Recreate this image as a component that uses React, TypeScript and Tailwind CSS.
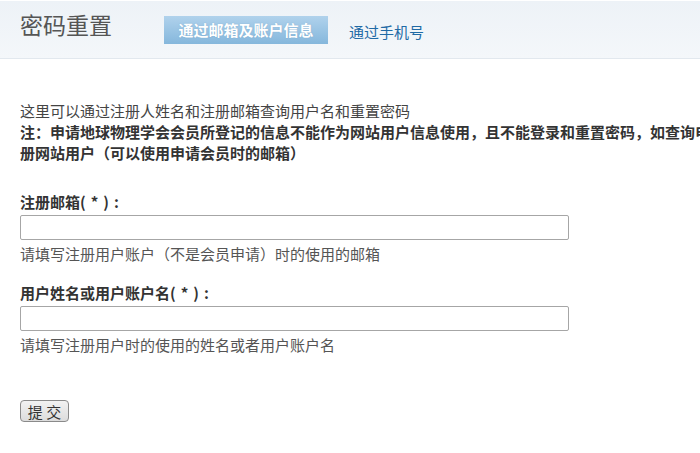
import { FC } from "react";

const font = { fontFamily: '"Noto Sans CJK SC", "Noto Sans", sans-serif' };

const Field: FC<{ label: string; hint: string; top: string }> = ({ label, hint, top }) => (
  <div className={top}>
    <p className="font-bold text-[15px] leading-[21px] text-[#333] whitespace-nowrap">
      {label}
      <span className="tracking-[5px]">(*):</span>
    </p>
    <input
      type="text"
      className="mt-[3px] block w-[549px] h-[25px] border border-[#a6a6a6] rounded-[2px] bg-white outline-none"
    />
    <p className="mt-[3px] text-[15px] leading-[21px] text-[#555]">{hint}</p>
  </div>
);

const App: FC = () => {
  return (
    <div className="w-[700px] h-[453px] overflow-hidden bg-white" style={font}>
      <div className="h-[59px] border-b border-[#e2e8ee] bg-gradient-to-b from-[#edf2f7] to-[#f4f7fa] border-t border-t-white flex items-start px-[20px]">
        <h1 className="mt-[8px] text-[23px] leading-[30px] text-[#555] font-normal whitespace-nowrap">
          密码重置
        </h1>
        <div className="ml-[52px] mt-[15px] w-[164px] h-[28px] flex items-center justify-center bg-gradient-to-b from-[#b0d2ec] to-[#85b7dc] text-white font-bold text-[15px] whitespace-nowrap [text-shadow:0_0_1px_rgba(80,130,170,0.5)]">
          通过邮箱及账户信息
        </div>
        <a className="ml-[21px] mt-[20px] text-[15px] leading-[21px] text-[#1f6aa5] whitespace-nowrap cursor-pointer">
          通过手机号
        </a>
      </div>

      <div className="px-[20px]">
        <p className="mt-[41px] text-[15px] leading-[21px] text-[#444] whitespace-nowrap">
          这里可以通过注册人姓名和注册邮箱查询用户名和重置密码
        </p>
        <p className="font-bold text-[15px] leading-[21px] text-[#333] whitespace-nowrap">
          注：申请地球物理学会会员所登记的信息不能作为网站用户信息使用，且不能登录和重置密码，如查询电子邮箱请注
          <br />
          册网站用户（可以使用申请会员时的邮箱）
        </p>

        <Field top="mt-[28px]" label="注册邮箱" hint="请填写注册用户账户（不是会员申请）时的使用的邮箱" />
        <Field top="mt-[18px]" label="用户姓名或用户账户名" hint="请填写注册用户时的使用的姓名或者用户账户名" />

        <button className="mt-[45px] w-[49px] h-[22px] flex items-center justify-center border border-[#8a8a8a] rounded-[4px] bg-gradient-to-b from-[#f2f2f2] to-[#dcdcdc] text-[15px] leading-none text-[#333] whitespace-nowrap">
          提 交
        </button>
      </div>
    </div>
  );
};

export default App;
